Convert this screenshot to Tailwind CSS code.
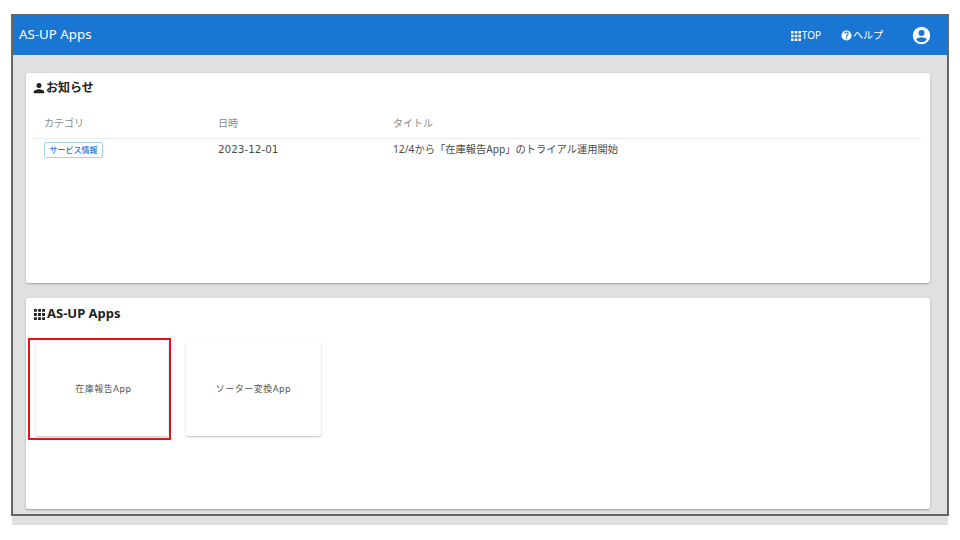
<!DOCTYPE html>
<html lang="ja">
<head>
    <meta charset="UTF-8">
    <title>AS-UP Apps</title>
    <script src="https://cdn.jsdelivr.net/npm/@tailwindcss/browser@4"></script>
</head>
<body class="bg-white w-[960px] h-[540px] overflow-hidden font-['Noto_Sans','Noto_Sans_CJK_JP',sans-serif]">
    <div class="pt-[14px] pl-[11px]">
        <div class="w-[938px] h-[502px] border-2 border-[#666] bg-[#e0e0e0] flex flex-col">
            <header class="h-[39px] shrink-0 bg-[#1976d2] text-white flex items-center pl-[6px] pr-[16px]">
                <span class="text-[13.3px] -mt-[1px]">AS-UP Apps</span>
                <div class="ml-auto flex items-center text-[10px]">
                    <svg class="w-[10px] h-[10px]" viewBox="0 0 10 10" fill="#fff"><path d="M0 0h2.600v2.600H0zM3.700 0h2.600v2.600H3.700zM7.400 0H10v2.600H7.400zM0 3.700h2.600v2.600H0zM3.700 3.700h2.600v2.600H3.700zM7.400 3.700H10v2.600H7.400zM0 7.400h2.600V10H0zM3.700 7.400h2.600V10H3.700zM7.400 7.400H10V10H7.400z"/></svg>
                    <span class="ml-[1px]">TOP</span>
                    <svg class="w-[11px] h-[11px] ml-[20px]" viewBox="0 0 24 24" fill="#fff"><path d="M12 1a11 11 0 1 0 0 22 11 11 0 0 0 0-22zm1.200 18h-2.500v-2.500h2.500V19zm2.600-8.200-1.100 1.100c-.9.9-1.500 1.700-1.500 3.100h-2.500v-.6c0-1.200.5-2.300 1.400-3.100l1.500-1.600c.5-.4.7-1 .7-1.700a2.300 2.300 0 0 0-4.600 0H7.200a4.800 4.800 0 0 1 9.600 0c0 1.100-.4 2-1 2.800z"/></svg>
                    <span class="ml-[1px]">ヘルプ</span>
                    <svg class="w-[19px] h-[19px] ml-[29px] -mt-[1px]" viewBox="0 0 24 24" fill="#fff"><path d="M12 1a11 11 0 1 0 0 22 11 11 0 0 0 0-22zm0 4a3.800 3.800 0 1 1 0 7.600A3.800 3.800 0 0 1 12 5zm0 15.600c-2.800 0-5.300-1.300-6.900-3.400 1.300-1.900 4.300-2.900 6.900-2.900s5.600 1 6.900 2.900c-1.600 2.100-4.100 3.400-6.900 3.400z"/></svg>
                </div>
            </header>
            <main class="flex-1 pl-[13px] pr-[17px] pt-[18px] flex flex-col gap-[15px]">
                <section class="h-[210px] bg-white rounded-[2px] shadow-[0_1px_2px_rgba(0,0,0,0.3)] px-[8px] pt-[6px]">
                    <h2 class="flex items-center text-[12px] font-bold text-[#222] h-[18px]">
                        <svg class="w-[12px] h-[12px] -ml-[1px] mr-[1px]" viewBox="0 0 24 24" fill="#222"><path d="M12 12a5 5 0 1 0 0-10 5 5 0 0 0 0 10zm0 2.500c-4 0-10.500 2-10.500 5.500v2.500h21V20c0-3.500-6.500-5.500-10.500-5.500z"/></svg>
                        お知らせ
                    </h2>
                    <div class="mt-[17px] grid grid-cols-[174px_175px_1fr] text-[10px] text-[#8a8a8a] h-[25px] pb-[6px] items-center border-b border-[#ececec] pl-[10px]">
                        <span>カテゴリ</span><span>日時</span><span>タイトル</span>
                    </div>
                    <div class="grid grid-cols-[174px_175px_1fr] text-[10.25px] text-[#4a4a4a] h-[22px] items-center pl-[10px]">
                        <span class="w-[59px] h-[16px] border border-[#a6d2f5] rounded-[2px] text-[#1976d2] text-[8px] font-medium flex items-center justify-center">サービス情報</span>
                        <span class="text-[10.4px] font-['DejaVu_Sans',sans-serif] -mt-[1px]">2023-12-01</span>
                        <span class="-mt-[1px]">12/4から「在庫報告App」のトライアル運用開始</span>
                    </div>
                </section>
                <section class="h-[211px] bg-white rounded-[2px] shadow-[0_1px_2px_rgba(0,0,0,0.3)] px-[8px] pt-[7px]">
                    <h2 class="flex items-center text-[13px] font-bold text-[#222] h-[18px]">
                        <svg class="w-[11px] h-[11px] mr-[2px]" viewBox="0 0 10 10" fill="#222"><path d="M0 0h2.600v2.600H0zM3.700 0h2.600v2.600H3.700zM7.400 0H10v2.600H7.400zM0 3.700h2.600v2.600H0zM3.700 3.700h2.600v2.600H3.700zM7.400 3.700H10v2.600H7.400zM0 7.400h2.600V10H0zM3.700 7.400h2.600V10H3.700zM7.400 7.400H10V10H7.400z"/></svg>
                        AS-UP Apps
                    </h2>
                    <div class="mt-[18px] ml-[2px] flex gap-[18px] text-[9px] tracking-[0.5px] text-[#555]">
                        <div class="relative w-[132px] h-[95px] pl-[3px] bg-white rounded-[2px] shadow-[0_1px_2px_rgba(0,0,0,0.25)] flex items-center justify-center">在庫報告App
                            <div class="absolute -left-[8px] -top-[3px] w-[143px] h-[102px] border-2 border-[#e8101a]"></div>
                        </div>
                        <div class="w-[135px] h-[95px] bg-white rounded-[2px] shadow-[0_1px_2px_rgba(0,0,0,0.25)] flex items-center justify-center">ソーター変換App</div>
                    </div>
                </section>
            </main>
        </div>
        <div class="ml-[1px] w-[936px] h-[9px] bg-[#e0e0e0]"></div>
    </div>
</body>
</html>
